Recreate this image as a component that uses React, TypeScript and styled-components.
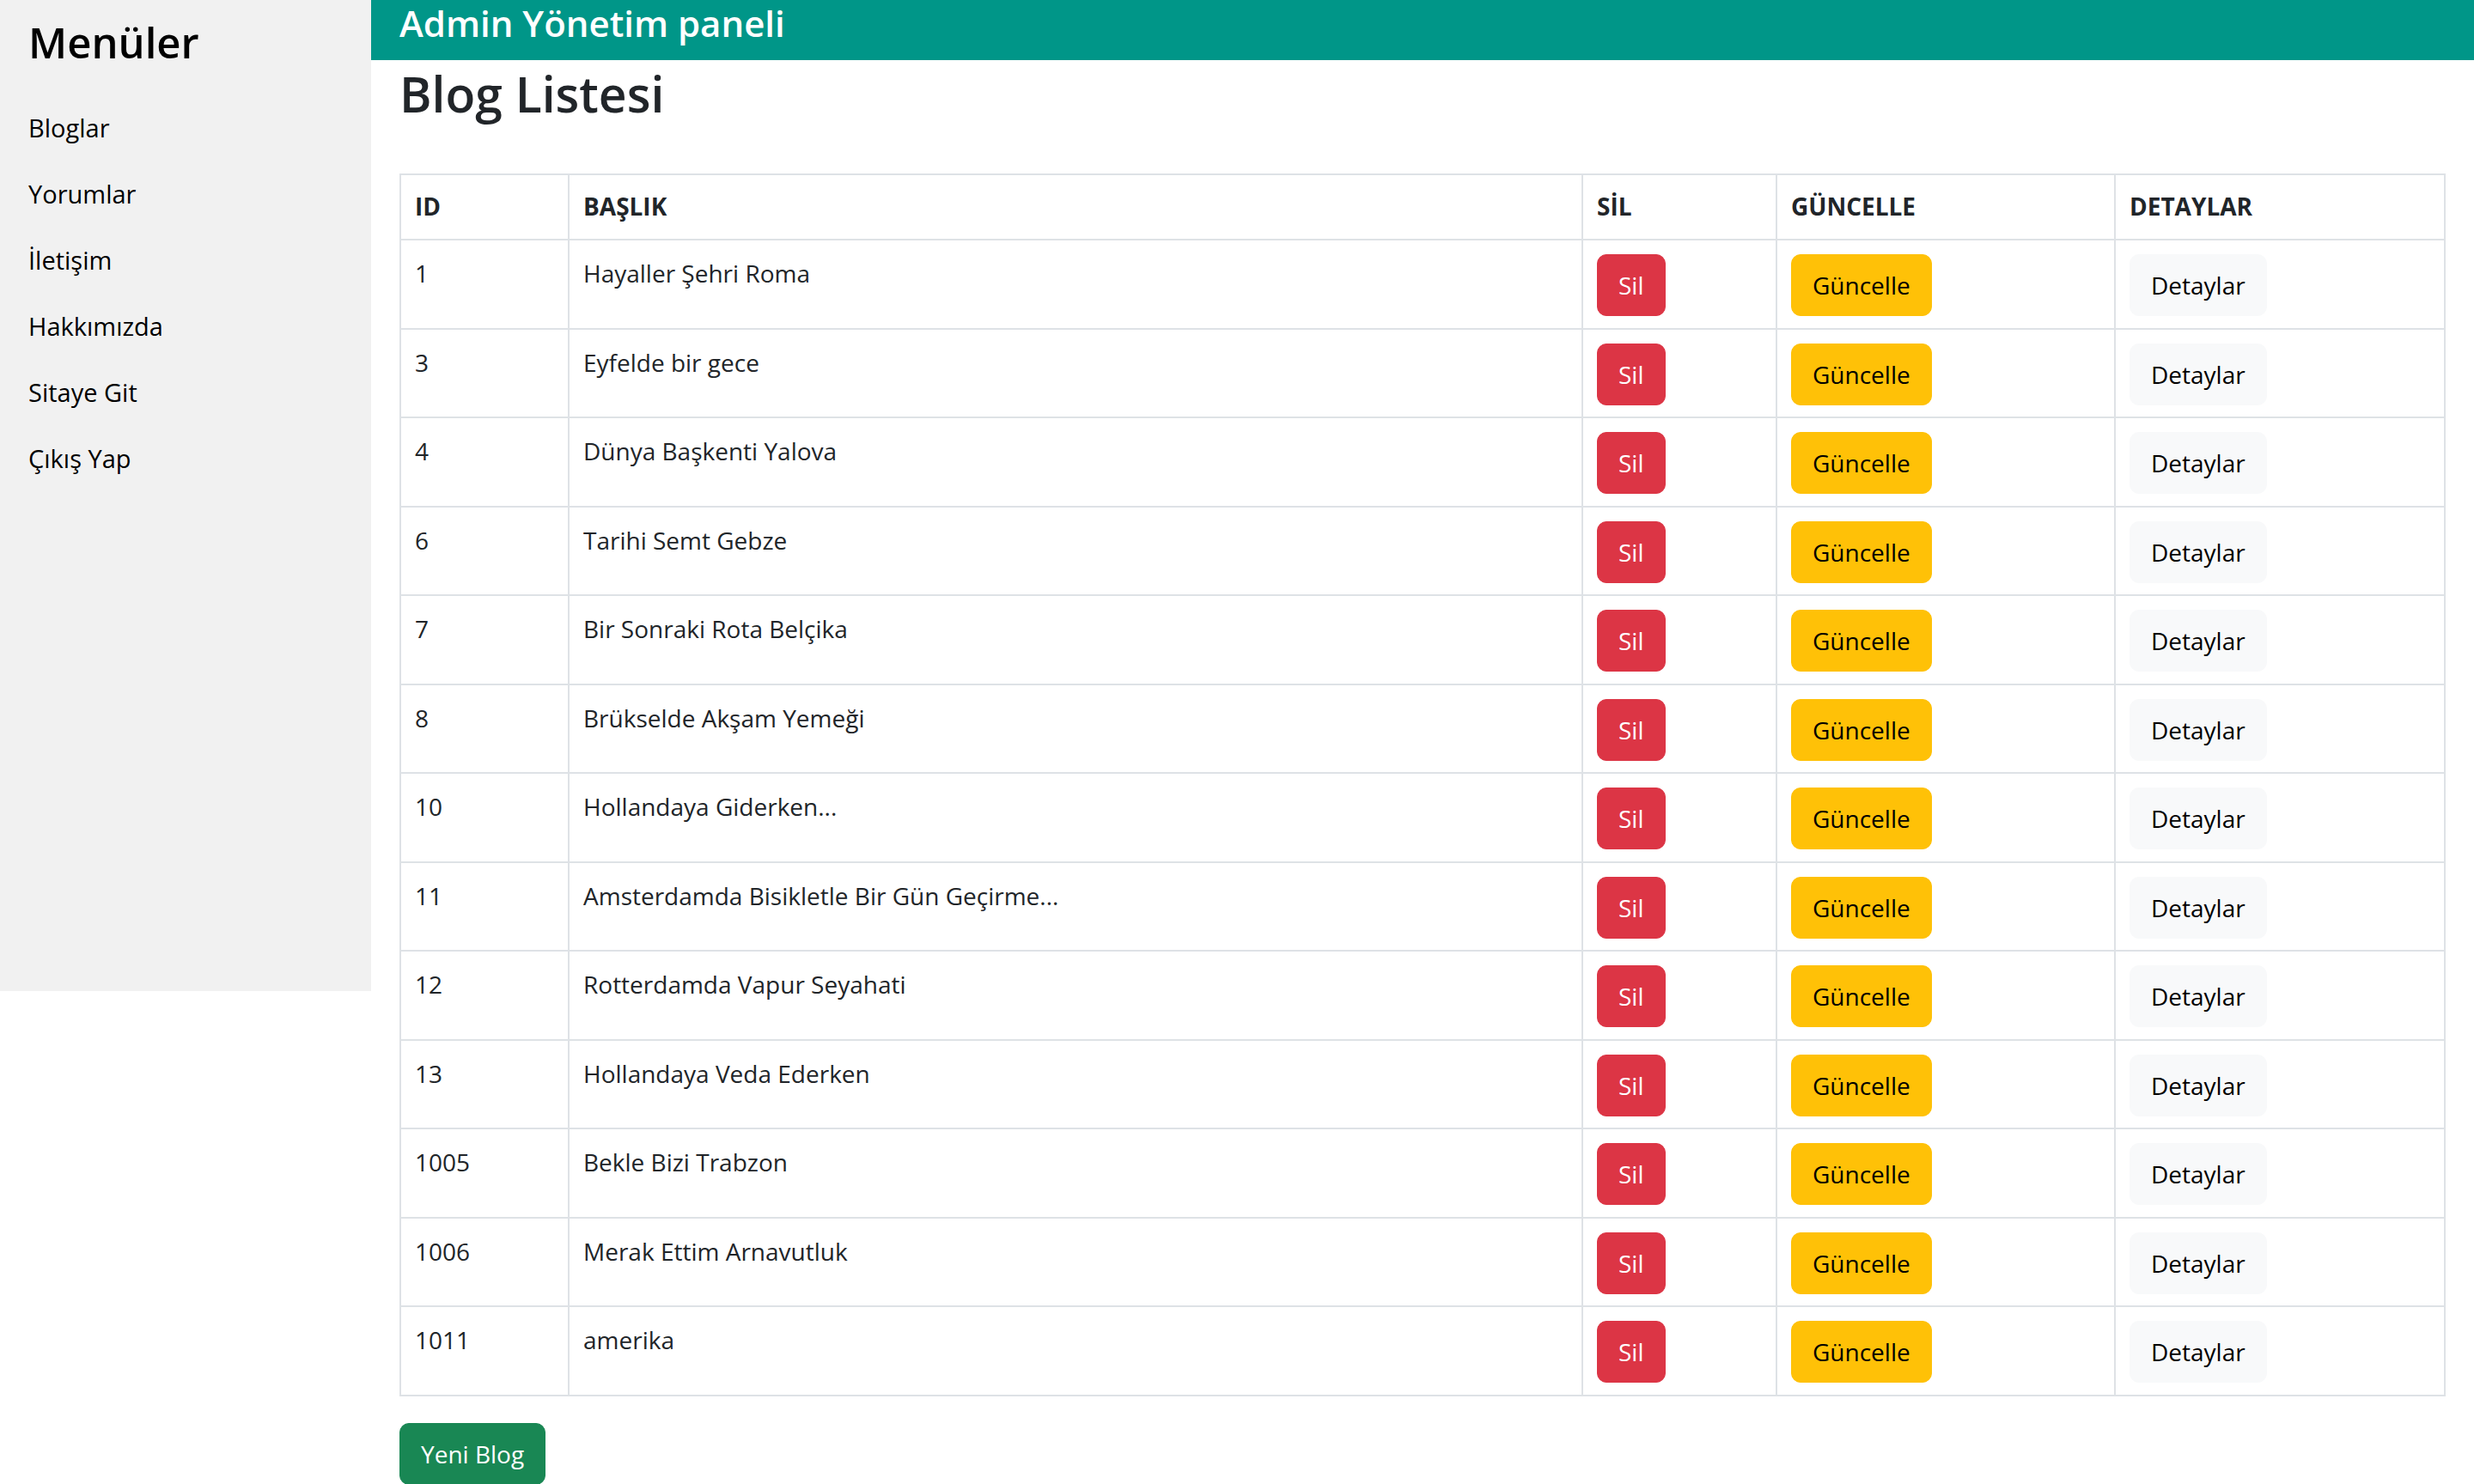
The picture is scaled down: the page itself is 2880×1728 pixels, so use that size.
import React from "react";
import styled, { createGlobalStyle } from "styled-components";

const GlobalStyle = createGlobalStyle`
  * {
    box-sizing: border-box;
  }
  body {
    margin: 0;
    background: #ffffff;
    font-family: "Open Sans", "Noto Sans", sans-serif;
    color: #212529;
  }
`;

const Page = styled.div`
  display: flex;
  align-items: flex-start;
  width: 2880px;
`;

const Sidebar = styled.nav`
  flex: 0 0 432px;
  height: 1154px;
  background: #f1f1f1;
  display: flex;
  flex-direction: column;
`;

const MenuTitle = styled.h3`
  margin: 12px 0 24px;
  padding: 0 33px;
  font-size: 49px;
  font-weight: 600;
  line-height: 74px;
  color: #000;
`;

const MenuItem = styled.a`
  display: block;
  padding: 16px 33px;
  font-size: 29px;
  line-height: 45px;
  color: #000;
  text-decoration: none;
`;

const Main = styled.main`
  flex: 1;
  min-width: 0;
`;

const TopBar = styled.header`
  height: 70px;
  padding: 0 33px;
  background: #009688;
  color: #fff;
`;

const TopTitle = styled.h2`
  margin: 0;
  font-size: 42px;
  font-weight: 600;
  line-height: 53px;
`;

const Content = styled.section`
  padding: 0 33px;
`;

const PageTitle = styled.h1`
  margin: 1px 0 0;
  height: 131px;
  font-size: 57px;
  font-weight: 600;
  line-height: 76px;
  color: #212529;
`;

const Table = styled.table`
  width: 100%;
  table-layout: fixed;
  border-collapse: separate;
  border-spacing: 0;
  border-top: 2px solid #dee2e6;
  border-left: 2px solid #dee2e6;
  margin-bottom: 31px;
  font-size: 28px;
  line-height: 45px;
`;

const Th = styled.th<{ w?: number }>`
  width: ${(p) => (p.w ? `${p.w}px` : "auto")};
  padding: 14px 16px 15px;
  text-align: left;
  font-weight: 700;
  border-right: 2px solid #dee2e6;
  border-bottom: 2px solid #dee2e6;
`;

const Td = styled.td`
  padding: 16px 16px 13.5px;
  vertical-align: top;
  border-right: 2px solid #dee2e6;
  border-bottom: 2px solid #dee2e6;
  white-space: nowrap;
  overflow: hidden;
`;

const Button = styled.a<{ bg: string; fg: string }>`
  display: inline-block;
  padding: 12px 24px;
  border: 1px solid ${(p) => p.bg};
  border-radius: 11px;
  background: ${(p) => p.bg};
  color: ${(p) => p.fg};
  font-size: 28px;
  line-height: 46px;
  text-decoration: none;
  cursor: pointer;
`;

const menu = ["Bloglar", "Yorumlar", "İletişim", "Hakkımızda", "Sitaye Git", "Çıkış Yap"];

const blogs: [number, string][] = [
  [1, "Hayaller Şehri Roma"],
  [3, "Eyfelde bir gece"],
  [4, "Dünya Başkenti Yalova"],
  [6, "Tarihi Semt Gebze"],
  [7, "Bir Sonraki Rota Belçika"],
  [8, "Brükselde Akşam Yemeği"],
  [10, "Hollandaya Giderken..."],
  [11, "Amsterdamda Bisikletle Bir Gün Geçirme..."],
  [12, "Rotterdamda Vapur Seyahati"],
  [13, "Hollandaya Veda Ederken"],
  [1005, "Bekle Bizi Trabzon"],
  [1006, "Merak Ettim Arnavutluk"],
  [1011, "amerika"],
];

export default function App() {
  return (
    <>
      <GlobalStyle />
      <Page>
        <Sidebar>
          <MenuTitle>Menüler</MenuTitle>
          {menu.map((m) => (
            <MenuItem key={m} href="#">
              {m}
            </MenuItem>
          ))}
        </Sidebar>
        <Main>
          <TopBar>
            <TopTitle>Admin Yönetim paneli</TopTitle>
          </TopBar>
          <Content>
            <PageTitle>Blog Listesi</PageTitle>
            <Table>
              <thead>
                <tr>
                  <Th w={196}>ID</Th>
                  <Th w={1180}>BAŞLIK</Th>
                  <Th w={226}>SİL</Th>
                  <Th w={394}>GÜNCELLE</Th>
                  <Th>DETAYLAR</Th>
                </tr>
              </thead>
              <tbody>
                {blogs.map(([id, title]) => (
                  <tr key={id}>
                    <Td>{id}</Td>
                    <Td>{title}</Td>
                    <Td>
                      <Button bg="#dc3545" fg="#fff">Sil</Button>
                    </Td>
                    <Td>
                      <Button bg="#ffc107" fg="#000">Güncelle</Button>
                    </Td>
                    <Td>
                      <Button bg="#f8f9fa" fg="#000">Detaylar</Button>
                    </Td>
                  </tr>
                ))}
              </tbody>
            </Table>
            <Button bg="#198754" fg="#fff">Yeni Blog</Button>
          </Content>
        </Main>
      </Page>
    </>
  );
}
